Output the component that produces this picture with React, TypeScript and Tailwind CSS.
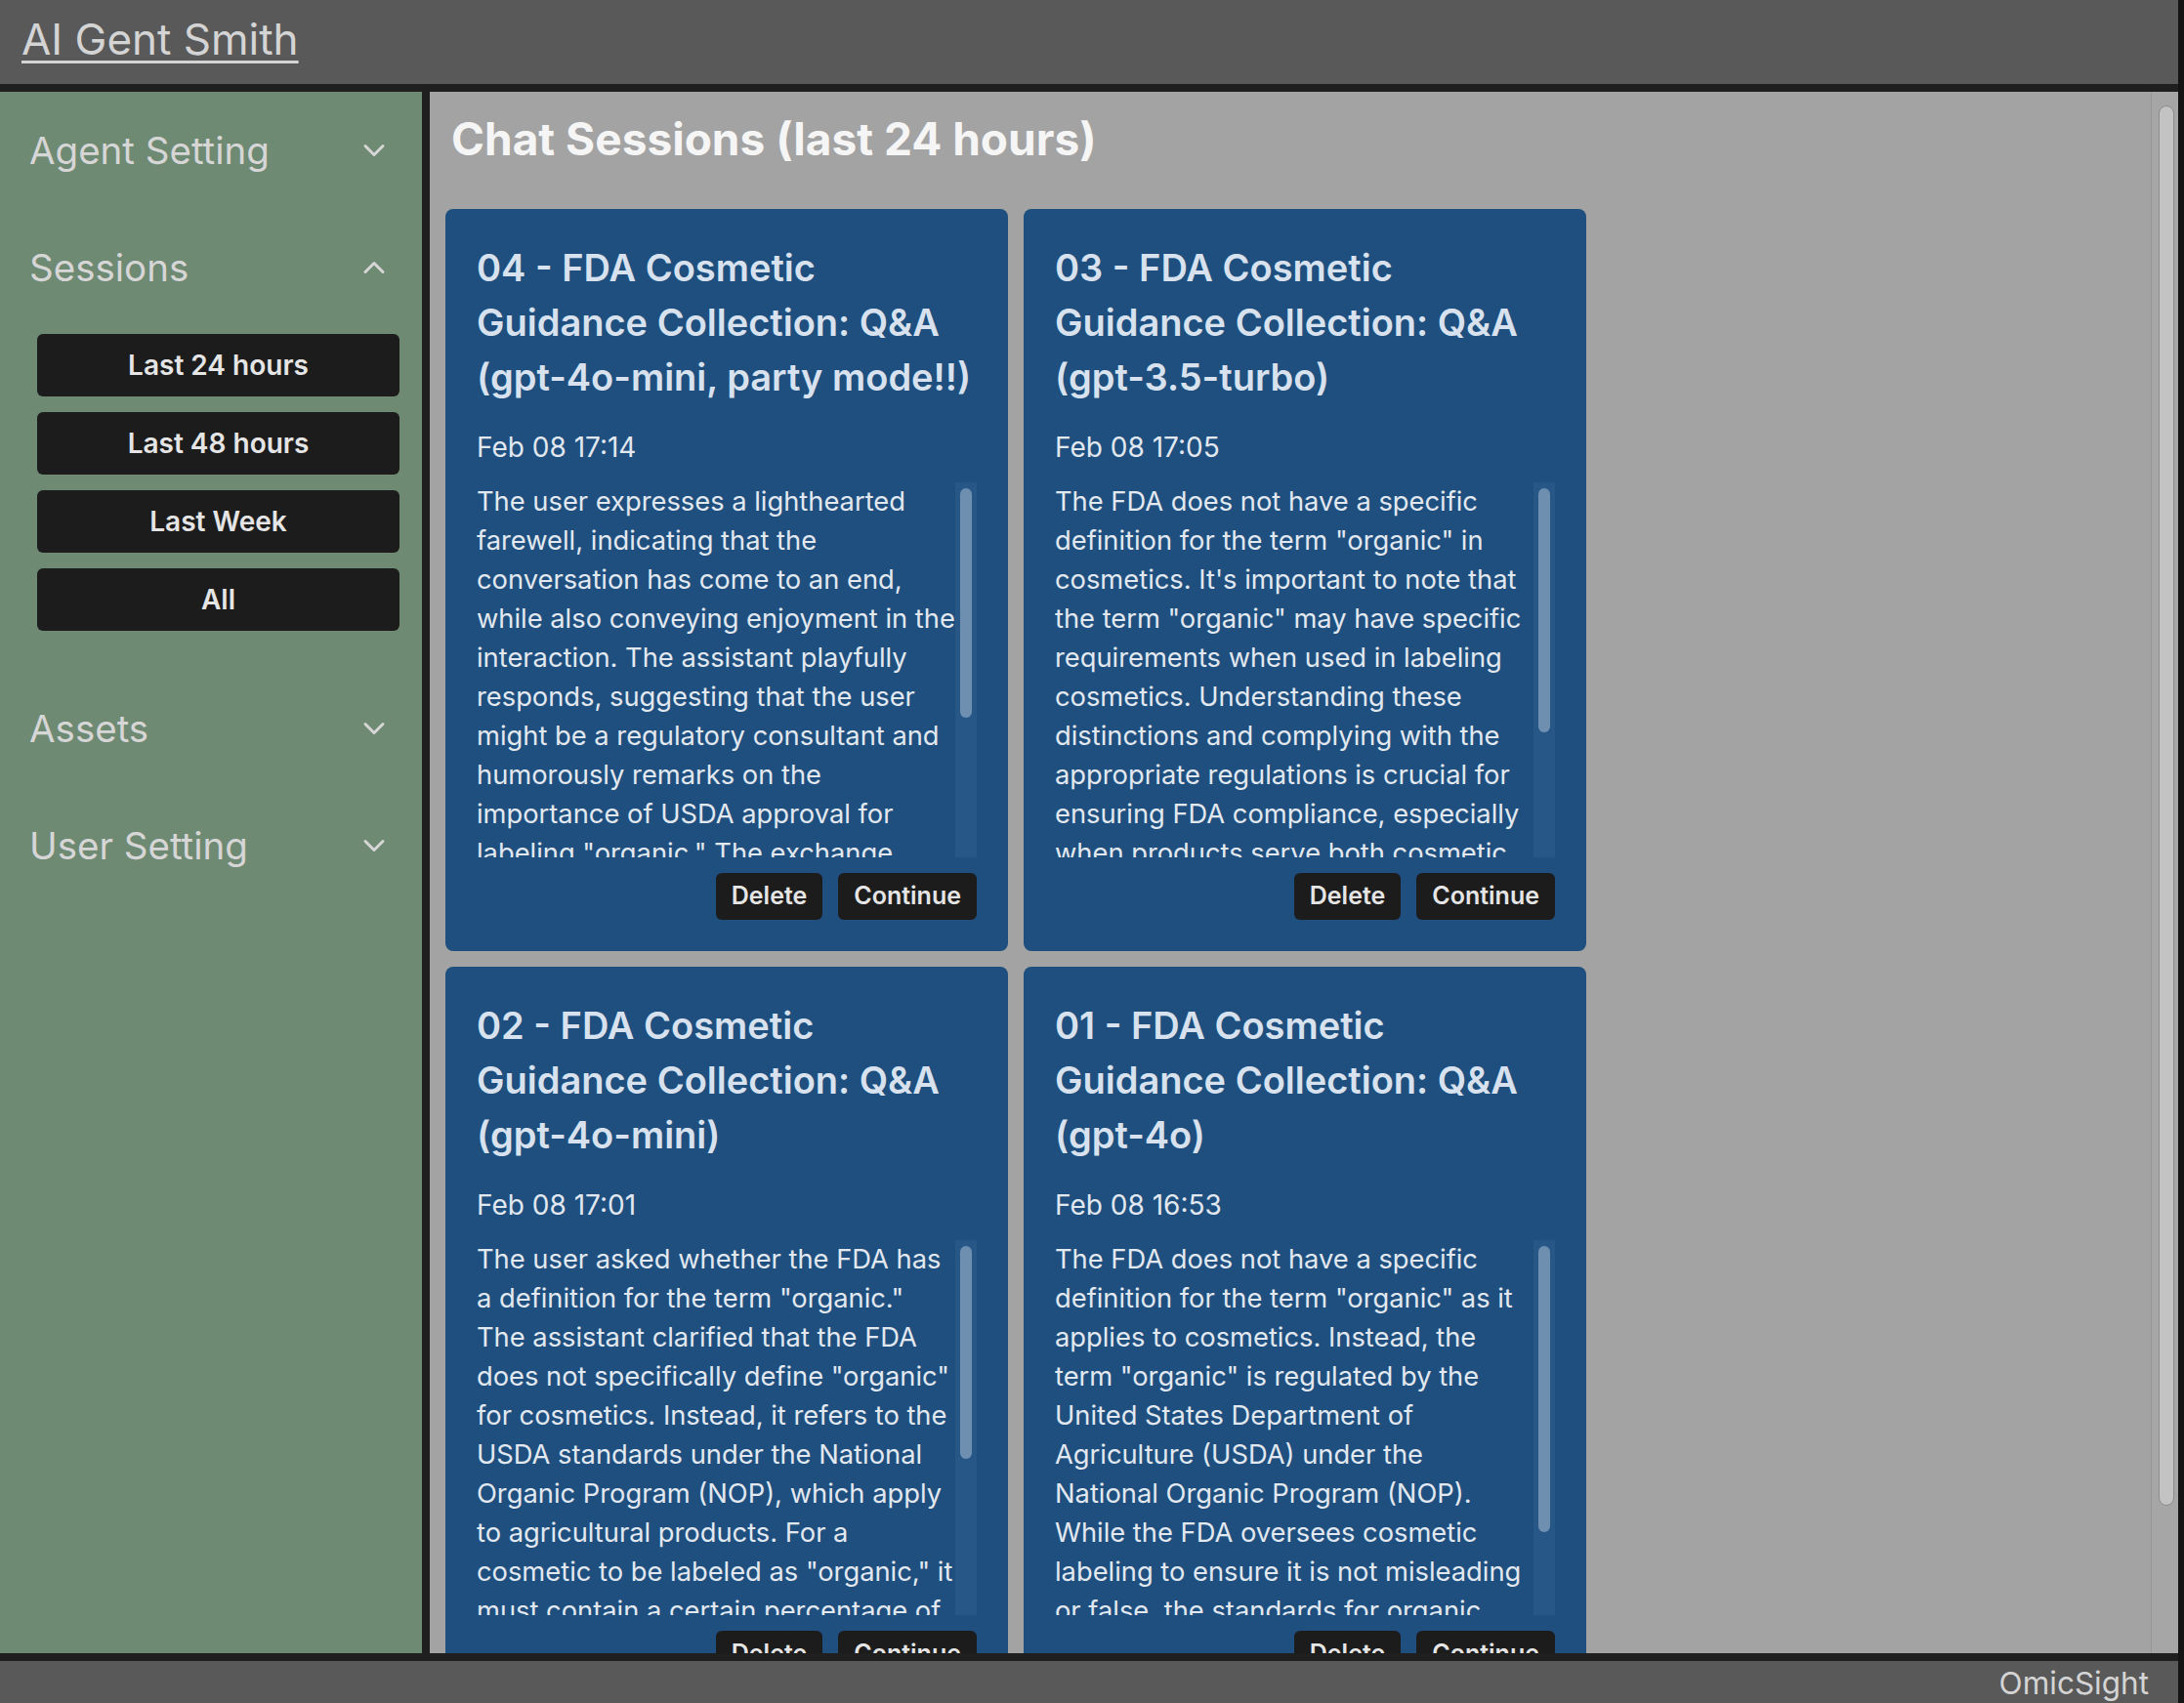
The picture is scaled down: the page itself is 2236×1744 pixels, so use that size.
import { ChevronDown, ChevronUp } from "lucide-react";

const font = { fontFamily: "Inter, 'Liberation Sans', sans-serif" };

interface Session {
  title: string[];
  date: string;
  summary: string[];
  thumb: number;
}

const sessions: Session[] = [
  {
    title: ["04 - FDA Cosmetic", "Guidance Collection: Q&A", "(gpt-4o-mini, party mode!!)"],
    date: "Feb 08 17:14",
    thumb: 235,
    summary: [
      "The user expresses a lighthearted",
      "farewell, indicating that the",
      "conversation has come to an end,",
      "while also conveying enjoyment in the",
      "interaction. The assistant playfully",
      "responds, suggesting that the user",
      "might be a regulatory consultant and",
      "humorously remarks on the",
      "importance of USDA approval for",
      'labeling "organic." The exchange',
      "remains friendly and engaging.",
    ],
  },
  {
    title: ["03 - FDA Cosmetic", "Guidance Collection: Q&A", "(gpt-3.5-turbo)"],
    date: "Feb 08 17:05",
    thumb: 250,
    summary: [
      "The FDA does not have a specific",
      'definition for the term "organic" in',
      "cosmetics. It's important to note that",
      'the term "organic" may have specific',
      "requirements when used in labeling",
      "cosmetics. Understanding these",
      "distinctions and complying with the",
      "appropriate regulations is crucial for",
      "ensuring FDA compliance, especially",
      "when products serve both cosmetic",
      "and drug purposes.",
    ],
  },
  {
    title: ["02 - FDA Cosmetic", "Guidance Collection: Q&A", "(gpt-4o-mini)"],
    date: "Feb 08 17:01",
    thumb: 218,
    summary: [
      "The user asked whether the FDA has",
      'a definition for the term "organic."',
      "The assistant clarified that the FDA",
      'does not specifically define "organic"',
      "for cosmetics. Instead, it refers to the",
      "USDA standards under the National",
      "Organic Program (NOP), which apply",
      "to agricultural products. For a",
      'cosmetic to be labeled as "organic," it',
      "must contain a certain percentage of",
      "organic ingredients.",
    ],
  },
  {
    title: ["01 - FDA Cosmetic", "Guidance Collection: Q&A", "(gpt-4o)"],
    date: "Feb 08 16:53",
    thumb: 293,
    summary: [
      "The FDA does not have a specific",
      'definition for the term "organic" as it',
      "applies to cosmetics. Instead, the",
      'term "organic" is regulated by the',
      "United States Department of",
      "Agriculture (USDA) under the",
      "National Organic Program (NOP).",
      "While the FDA oversees cosmetic",
      "labeling to ensure it is not misleading",
      "or false, the standards for organic",
      "claims come from the USDA.",
    ],
  },
];

function SectionHeader({ label, open = false }: { label: string; open?: boolean }) {
  return (
    <div className="flex h-[120px] items-center justify-between pl-[30px] pr-[31px]">
      <span className="text-[38.5px] leading-[48px] text-[#d6d6d6]">{label}</span>
      {open ? (
        <ChevronUp size={36} strokeWidth={2} className="text-[#d6d6d6]" />
      ) : (
        <ChevronDown size={36} strokeWidth={2} className="text-[#d6d6d6]" />
      )}
    </div>
  );
}

function SessionCard({ session }: { session: Session }) {
  return (
    <div className="flex w-[576px] flex-col rounded-lg bg-[#1e4f7e] p-8 text-[#d8e1ee]">
      <h2 className="text-[38px] font-semibold leading-[56px] whitespace-nowrap">
        {session.title.map((line) => (
          <div key={line}>{line}</div>
        ))}
      </h2>
      <div className="mt-6 text-[28px] leading-[40px] text-[#e2e8f0]">{session.date}</div>
      <div className="mt-4 flex h-[384px]">
        <div className="flex-1 overflow-hidden text-[27.3px] leading-[40px] whitespace-nowrap text-[#e2e8f0]">
          {session.summary.map((line, i) => (
            <div key={i}>{line}</div>
          ))}
        </div>
        <div className="w-[22px] bg-[#265787] px-[5px] pt-[6px]">
          <div className="w-[12px] rounded-full bg-[#6e8fb0]" style={{ height: session.thumb }} />
        </div>
      </div>
      <div className="mt-4 flex justify-end gap-4">
        <button className="h-12 rounded-md bg-[#1c1c1c] px-[16px] text-[25px] font-semibold text-[#e5e5e5]">
          Delete
        </button>
        <button className="h-12 rounded-md bg-[#1c1c1c] px-[16px] text-[25px] font-semibold text-[#e5e5e5]">
          Continue
        </button>
      </div>
    </div>
  );
}

export default function App() {
  return (
    <div className="flex h-[1744px] w-[2236px] overflow-hidden bg-[#141414]" style={font}>
      <div className="flex w-[2230px] flex-col">
        <header className="flex h-[94px] items-start border-b-8 border-[#1f1f1f] bg-[#595959] pl-[22px] pt-[12px]">
          <a className="text-[44px] leading-[56px] text-[#d4d4d4] underline decoration-[3px] underline-offset-[6px]">
            AI Gent Smith
          </a>
        </header>

        <div className="flex min-h-0 flex-1">
          <aside className="w-[440px] shrink-0 border-r-8 border-[#1f1f1f] bg-[#6f8a73]">
            <SectionHeader label="Agent Setting" />
            <SectionHeader label="Sessions" open />
            <div className="flex flex-col gap-4 pb-10 pl-[38px] pr-[23px] pt-2">
              {["Last 24 hours", "Last 48 hours", "Last Week", "All"].map((label) => (
                <button
                  key={label}
                  className="h-16 rounded-md bg-[#1c1c1c] text-[28px] font-semibold text-[#e5e5e5]"
                >
                  {label}
                </button>
              ))}
            </div>
            <SectionHeader label="Assets" />
            <SectionHeader label="User Setting" />
          </aside>

          <main className="min-w-0 flex-1 overflow-hidden bg-[#a3a3a3] px-4 pt-4">
            <h1 className="mb-10 pl-[6px] text-[46px] font-bold leading-[64px] text-[#f5f5f5]">
              Chat Sessions (last 24 hours)
            </h1>
            <div className="grid grid-cols-[repeat(2,576px)] gap-4">
              {sessions.map((s) => (
                <SessionCard key={s.date} session={s} />
              ))}
            </div>
          </main>

          <div className="w-[28px] shrink-0 border-l border-[#989898] bg-[#a6a6a6] pl-[7px] pt-[14px]">
            <div className="h-[1434px] w-[16px] rounded-full border border-[#8c8c8c] bg-[#c3c3c3]" />
          </div>
        </div>

        <footer className="flex h-[51px] justify-end border-t-8 border-[#1f1f1f] bg-[#595959] pr-[30px] pt-[3px]">
          <span className="text-[31.5px] leading-[40px] text-[#d4d4d4]">OmicSight</span>
        </footer>
      </div>
      <div className="flex-1 bg-[#141414]" />
    </div>
  );
}
